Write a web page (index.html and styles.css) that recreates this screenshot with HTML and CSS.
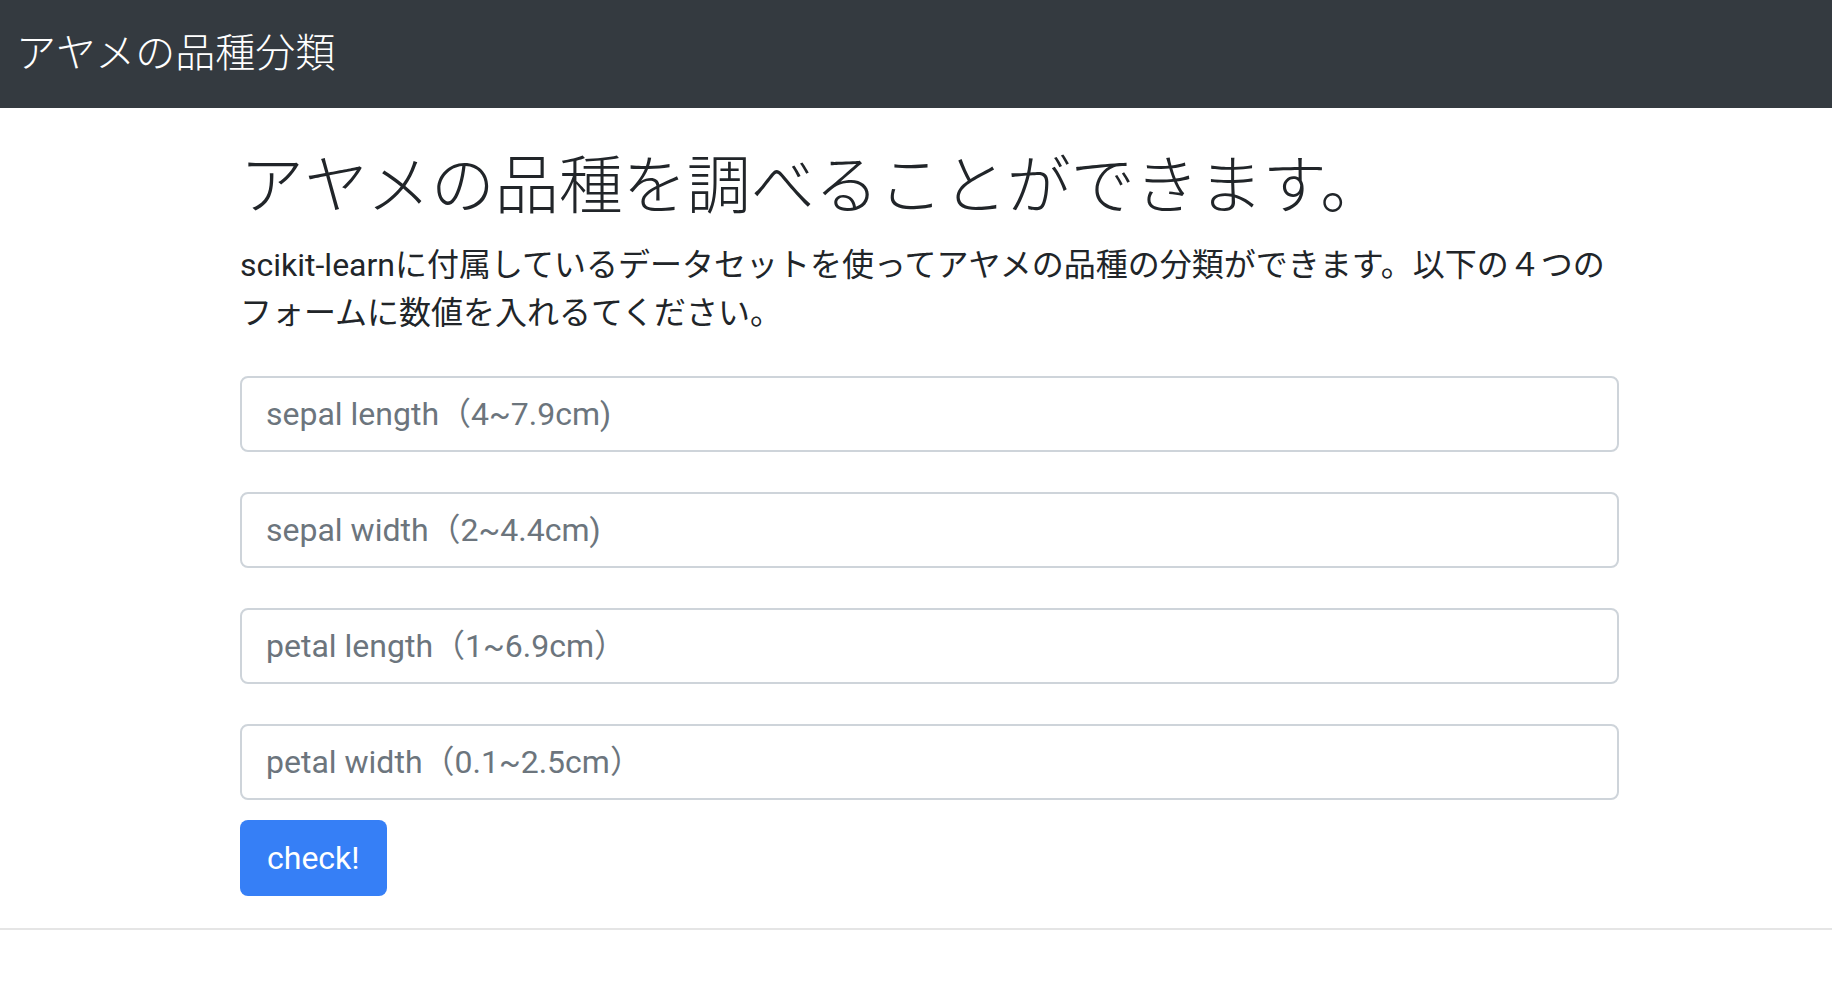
FILE: index.html
```html
<!DOCTYPE html>
<html lang="ja">
<head>
<meta charset="utf-8">
<title>アヤメの品種分類</title>
<link rel="stylesheet" href="styles.css">
</head>
<body>
<nav class="navbar">
  <span class="brand">アヤメの品種分類</span>
</nav>
<main class="container">
  <h1 class="title">アヤメの品種を調べることができます。</h1>
  <p class="lead">scikit-learnに付属しているデータセットを使ってアヤメの品種の分類ができます。以下の４つのフォームに数値を入れるてください。</p>
  <form class="form">
    <input class="field" type="text" placeholder="sepal length（4~7.9cm)">
    <input class="field" type="text" placeholder="sepal width（2~4.4cm)">
    <input class="field" type="text" placeholder="petal length（1~6.9cm）">
    <input class="field" type="text" placeholder="petal width（0.1~2.5cm）">
    <button class="btn" type="button">check!</button>
  </form>
</main>
<hr class="rule">
</body>
</html>
```
FILE: styles.css
```css
* { box-sizing: border-box; }
body {
  margin: 0;
  font-family: "Roboto", "Noto Sans CJK JP", sans-serif;
  color: #212529;
  background: #fff;
}
.navbar {
  height: 108px;
  background: #343a40;
  display: flex;
  align-items: center;
  padding: 0 0 8px 16px;
}
.brand {
  color: #fff;
  font-size: 40px;
  line-height: 60px;
  font-family: "Noto Sans CJK JP", sans-serif;
  font-weight: 300;
}
.container {
  margin-left: 240px;
  width: 1379px;
}
.title {
  margin: 34px 0 22px;
  font-size: 64px;
  line-height: 77px;
  font-family: "Noto Sans CJK JP", sans-serif;
  font-weight: 300;
}
.lead {
  margin: 0 0 39px;
  font-size: 32px;
  line-height: 48px;
  word-spacing: 0;
}
.form {
  display: flex;
  flex-direction: column;
  align-items: flex-start;
  gap: 40px;
}
.field {
  width: 100%;
  height: 76px;
  border: 2px solid #ced4da;
  border-radius: 8px;
  padding: 0 24px;
  font-family: inherit;
  font-size: 32px;
  color: #495057;
  background: #fff;
}
.field::placeholder { color: #6c757d; }
.btn {
  margin-top: -20px;
  height: 76px;
  padding: 0 27px;
  border: none;
  border-radius: 8px;
  background: #367ff6;
  color: #fff;
  font-family: inherit;
  font-size: 32px;
}
.rule {
  margin: 32px 0 0;
  border: 0;
  border-top: 2px solid #e5e5e5;
}
```
